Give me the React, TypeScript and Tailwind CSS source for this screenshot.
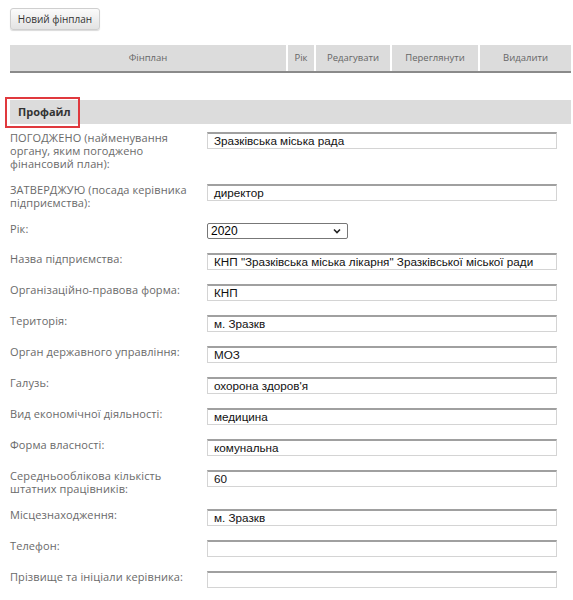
import React from "react";

const rows: { label: string; value?: string; select?: boolean }[] = [
  { label: "ПОГОДЖЕНО (найменування органу, яким погоджено фінансовий план):", value: "Зразківська міська рада" },
  { label: "ЗАТВЕРДЖУЮ (посада керівника підприємства):", value: "директор" },
  { label: "Рік:", value: "2020", select: true },
  { label: "Назва підприємства:", value: 'КНП "Зразківська міська лікарня" Зразківської міської ради' },
  { label: "Організаційно-правова форма:", value: "КНП" },
  { label: "Територія:", value: "м. Зразкв" },
  { label: "Орган державного управління:", value: "МОЗ" },
  { label: "Галузь:", value: "охорона здоров'я" },
  { label: "Вид економічної діяльності:", value: "медицина" },
  { label: "Форма власності:", value: "комунальна" },
  { label: "Середньооблікова кількість штатних працівників:", value: "60" },
  { label: "Місцезнаходження:", value: "м. Зразкв" },
  { label: "Телефон:", value: "" },
  { label: "Прізвище та ініціали керівника:", value: "" },
];

const cols = [
  { name: "Фінплан", w: "w-[276px]" },
  { name: "Рік", w: "w-[28px]" },
  { name: "Редагувати", w: "w-[76px]" },
  { name: "Переглянути", w: "w-[88px]" },
  { name: "Видалити", w: "flex-1" },
];

export default function App() {
  return (
    <div className="w-[573px] h-[600px] bg-white overflow-hidden font-['Open_Sans',sans-serif] pl-[10px] pr-[2px] pt-[8px]">
      <div className="flex">
        <button className="h-[22px] w-[90px] rounded-[3px] border border-[#cfcfcf] bg-gradient-to-b from-[#fbfbfb] to-[#e3e3e3] shadow-[0_1px_1px_rgba(0,0,0,0.15)] text-[10px] text-[#333]">
          Новий фінплан
        </button>
      </div>

      <div className="mt-[15px] flex h-[28px] border-b-2 border-[#8a8a8a] bg-[#dcdcdc]">
        {cols.map((c, i) => (
          <div
            key={c.name}
            className={`${c.w} flex items-center justify-center text-[9.5px] text-[#666] ${i > 0 ? "border-l-2 border-white" : ""}`}
          >
            {c.name}
          </div>
        ))}
      </div>

      <div className="relative mt-[27px] h-[24px] bg-[#dcdcdc] flex items-center">
        <span className="pl-[8px] text-[11px] font-bold text-[#333]">Профайл</span>
        <div className="absolute left-[-5px] top-[-3px] w-[75px] h-[31px] border-2 border-[#e0393e]" />
      </div>

      <div className="mt-[8px] flex flex-col gap-[14px]">
        {rows.map((r, i) => (
          <div key={i} className="flex items-start">
            <div className="w-[197px] pr-[12px] text-[11px] tracking-[0.1px] leading-[13px] text-[#6a6a6a] -mt-[1px]">
              {r.label}
            </div>
            {r.select ? (
              <div className="w-[141px] h-[16px] border border-[#777] rounded-[2px] flex items-center justify-between pl-[3px] pr-[6px] font-['Liberation_Sans',sans-serif] text-[12px] text-black">
                <span>{r.value}</span>
                <svg width="8" height="6" viewBox="0 0 8 6">
                  <path d="M1 1.5 L4 4.5 L7 1.5" fill="none" stroke="#222" strokeWidth="1.6" />
                </svg>
              </div>
            ) : (
              <div className="w-[350px] h-[17px] border border-[#d4d4d4] border-t-2 border-t-[#a0a0a0] pl-[6px] flex items-center font-['Liberation_Sans',sans-serif] text-[11.7px] text-[#111] whitespace-nowrap overflow-hidden">
                {r.value}
              </div>
            )}
          </div>
        ))}
      </div>
    </div>
  );
}
